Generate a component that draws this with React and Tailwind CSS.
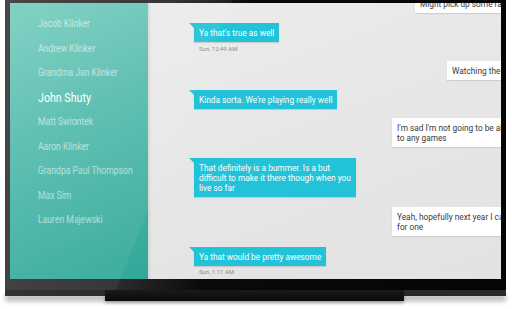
import React from "react";

const names = [
  "Jacob Klinker",
  "Andrew Klinker",
  "Grandma Jan Klinker",
  "John Shuty",
  "Matt Swiontek",
  "Aaron Klinker",
  "Grandpa Paul Thompson",
  "Max Sim",
  "Lauren Majewski",
];

function Received({ mt, children }) {
  return (
    <div className={`relative ml-[46px] w-max bg-[#22c3d8] px-[5px] py-[4.5px] text-[8.3px] leading-[10px] text-white shadow-[0_1px_1px_rgba(0,0,0,0.12)] ${mt}`}>
      <span className="absolute left-[-5px] top-0 h-0 w-0 border-l-[5px] border-t-[5px] border-l-transparent border-t-[#22c3d8]" />
      {children}
    </div>
  );
}

function Sent({ mt, ml, children }) {
  return (
    <div className={`w-max whitespace-nowrap bg-white px-[5px] py-[4.5px] text-[8.3px] leading-[10px] text-[#3a3a3a] shadow-[0_1px_1px_rgba(0,0,0,0.1)] ${mt} ${ml}`}>
      {children}
    </div>
  );
}

export default function App() {
  return (
    <div className="h-[309px] w-[512px] overflow-hidden bg-white font-['Roboto',sans-serif]">
      <div className="ml-[5px] w-[501px]">
        <div className="relative bg-[linear-gradient(100deg,#3d3d3d_0%,#2a2a2a_30%,#0a0a0a_45%,#050505_100%)] px-[5px] pb-[11px] pt-[3px]">
          <div className="relative flex h-[276px] w-[491px] overflow-hidden">
            <div className="relative z-10 flex w-[138px] shrink-0 flex-col bg-[linear-gradient(155deg,#7ccfc2_0%,#52baab_50%,#30a898_100%)] pl-[28px] pt-[9px] shadow-[1px_0_3px_rgba(0,0,0,0.12)]">
              {names.map((n) => (
                <div key={n} className="flex h-[24.5px] items-center">
                  <span
                    className={
                      n === "John Shuty"
                        ? "origin-left scale-x-[0.82] whitespace-nowrap text-[13px] text-white"
                        : "origin-left scale-x-[0.82] whitespace-nowrap text-[10.5px] text-white/55"
                    }
                  >
                    {n}
                  </span>
                </div>
              ))}
            </div>
            <div className="flex flex-1 flex-col bg-[linear-gradient(160deg,#ececec_0%,#e6e6e6_50%,#e2e2e2_100%)]">
              <Sent mt="-mt-[9px]" ml="ml-[267px]">Might pick up some rally towels</Sent>
              <Received mt="mt-[10px]">Ya that's true as well</Received>
              <div className="ml-[51px] mt-[3px] text-[6px] leading-[8px] text-[#8a8a8a]">Sun, 12:49 AM</div>
              <Sent mt="mt-[8px]" ml="ml-[299px]">Watching the game tonight</Sent>
              <Received mt="mt-[10px]">Kinda sorta. We're playing really well</Received>
              <Sent mt="mt-[9px]" ml="ml-[244px]">
                I'm sad I'm not going to be able to make it
                <br />
                to any games
              </Sent>
              <Received mt="mt-[11px]">
                That definitely is a bummer. Is a but
                <br />
                difficult to make it there though when you
                <br />
                live so far
              </Received>
              <Sent mt="mt-[10px]" ml="ml-[244px]">
                Yeah, hopefully next year I can make it
                <br />
                for one
              </Sent>
              <Received mt="mt-[11px]">Ya that would be pretty awesome</Received>
              <div className="ml-[51px] mt-[2px] text-[6px] leading-[8px] text-[#8a8a8a]">Sun, 1:11 AM</div>
            </div>
          </div>
          <div className="pointer-events-none absolute inset-0 z-20 bg-white/[0.06] [clip-path:polygon(0_0,227px_0,111px_100%,0_100%)]" />
        </div>
        <div className="h-[6px] w-full bg-[linear-gradient(90deg,#333_0%,#262626_40%,#2a2a2a_100%)] shadow-[0_5px_5px_rgba(0,0,0,0.3)]" />
        <div className="relative -mt-[6px] ml-[100px] h-[11px] w-[299px] bg-[linear-gradient(180deg,#1a1a1a,#0a0a0a)] shadow-[0_2px_3px_rgba(0,0,0,0.3)]" />
      </div>
    </div>
  );
}
